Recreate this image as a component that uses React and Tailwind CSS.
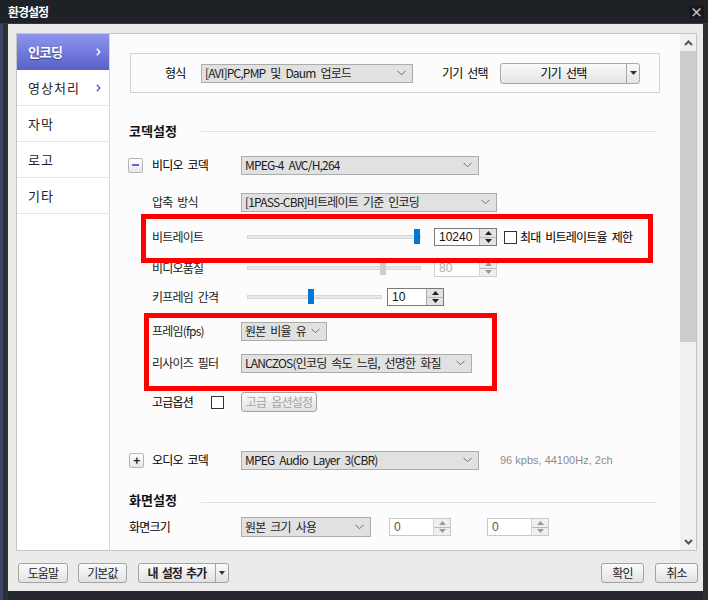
import React from 'react';

const KR = "font-['Noto_Sans_CJK_KR',sans-serif]";

const Chevron = ({ color = '#6e6e6e' }) => (
  <svg width="9" height="6" viewBox="0 0 9 6">
    <path d="M0.5 0.8 L4.5 4.8 L8.5 0.8" fill="none" stroke={color} strokeWidth="1" />
  </svg>
);

const SideArrow = ({ color }) => (
  <svg width="5" height="8" viewBox="0 0 5 8">
    <path d="M0.8 0.8 L3.8 4 L0.8 7.2" fill="none" stroke={color} strokeWidth="1.5" />
  </svg>
);

const Select = ({ w, h = 'h-[19px]', children }) => (
  <div className={`flex ${h} ${w} items-center justify-between border border-[#acacac] bg-[#e1e1e1] pl-[3px] pr-[6px] text-[12px] tracking-[-0.8px] [word-spacing:3px] text-[#1b1b1b]`}>
    <span className="whitespace-nowrap overflow-hidden">{children}</span>
    <Chevron />
  </div>
);

const SpinArrows = ({ faded }) => (
  <div className={`flex w-[17px] flex-col border-l ${faded ? 'border-[#d5d5d5] bg-[#efefef]' : 'border-[#acacac] bg-[#e3e3e3]'}`}>
    <div className="flex flex-1 items-center justify-center border-b border-[#b9b9b9]">
      <svg width="7" height="4" viewBox="0 0 7 4"><path d="M0 4 L3.5 0 L7 4 Z" fill={faded ? '#9a9a9a' : '#222'} /></svg>
    </div>
    <div className="flex flex-1 items-center justify-center">
      <svg width="7" height="4" viewBox="0 0 7 4"><path d="M0 0 L3.5 4 L7 0 Z" fill={faded ? '#9a9a9a' : '#222'} /></svg>
    </div>
  </div>
);

const Spin = ({ w, value, disabled, light }) => (
  <div className={`flex h-[18px] ${w} border ${disabled ? 'border-[#d0d0d0] text-[#b0b0b0]' : light ? 'border-[#c9c9c9] text-[#555]' : 'border-[#7a7a7a] text-[#111]'} bg-white`}>
    <div className="flex-1 pl-[4px] text-[12px] leading-[16px] font-['Liberation_Sans',sans-serif]">{value}</div>
    <SpinArrows faded={disabled || light} />
  </div>
);

const Slider = ({ w, pos, disabled }) => (
  <div className={`relative h-[16px] ${w}`}>
    <div className="absolute left-0 right-0 top-[6px] h-[4px] border border-[#d6d6d6] bg-[#e8e8e8]" />
    <div
      className={`absolute top-0 h-[15px] w-[6px] ${disabled ? 'bg-[#cdcdcd]' : 'bg-[#0078d7]'}`}
      style={{ left: pos }}
    />
  </div>
);

const Box = ({ className = '' }) => (
  <div className={`h-[13px] w-[13px] border border-[#333] bg-white ${className}`} />
);

const Btn = ({ className = '', children }) => (
  <div className={`flex h-[20px] items-center justify-center rounded-[3px] border border-[#a3a3a3] bg-gradient-to-b from-[#fbfbfb] to-[#e2e2e2] text-[12px] tracking-[-0.8px] [word-spacing:3px] text-[#222] ${className}`}>
    {children}
  </div>
);

const Label = ({ children }) => (
  <div className="w-[131px] pl-[42px] text-[12px] tracking-[-0.8px] [word-spacing:3px] text-[#1b1b1b] whitespace-nowrap">{children}</div>
);

const Toggle = ({ sign }) => (
  <div className="flex h-[15px] w-[15px] items-center justify-center rounded-[2px] border border-[#b5b5b5] bg-gradient-to-b from-white to-[#e6e6e6]">
    {sign === '-' ? (
      <div className="h-[2px] w-[7px] bg-[#5a68d8]" />
    ) : (
      <span className="text-[12px] font-bold leading-none text-[#222]">+</span>
    )}
  </div>
);

const SideItem = ({ children, arrow }) => (
  <div className="flex h-[36px] items-center justify-between border-b border-[#e6e6e6] pl-[11px] pr-[8px] text-[13px] tracking-[1px] text-[#222]">
    {children}
    {arrow && <SideArrow color="#5b68d6" />}
  </div>
);

export default function App() {
  return (
    <div className={`relative flex h-[600px] w-[708px] flex-col bg-[#24272c] ${KR}`}>
      {/* title */}
      <div className="flex h-[24px] items-center justify-between border-b border-[#34373c] bg-[#1e2126] pl-[8px] pr-[4px]">
        <span className="text-[12px] font-bold tracking-[-1px] text-white">환경설정</span>
        <div className="flex h-[12px] w-[15px] items-center justify-center bg-[#17191c] text-[13px] font-bold leading-none text-[#c8c8c8]">×</div>
      </div>

      <div className="flex flex-1">
        <div className="w-[3px] bg-[#3a4266]" />
        <div className="w-[5px] bg-[#2c2f34]" />
        <div className="flex h-[567px] w-[695px] flex-col bg-[#ebebeb] pt-[9px]">
          {/* main panel */}
          <div className="ml-[8px] flex h-[518px] w-[681px] border border-[#c4c4c4]">
            {/* sidebar */}
            <div className="w-[93px] border-r border-[#d8d8d8] bg-white">
              <div className="flex h-[36px] items-center justify-between bg-gradient-to-b from-[#8e95ee] to-[#5960c9] pl-[11px] pr-[8px] text-[13px] font-bold tracking-[-0.5px] text-white [text-shadow:0_1px_1px_rgba(0,0,40,0.4)]">
                인코딩
                <SideArrow color="#ffffff" />
              </div>
              <SideItem arrow>영상처리</SideItem>
              <SideItem>자막</SideItem>
              <SideItem>로고</SideItem>
              <SideItem>기타</SideItem>
            </div>

            {/* content */}
            <div className="relative w-[570px] overflow-hidden bg-[#fcfcfc] pt-[19px]">
              <div className="ml-[20px] flex h-[40px] w-[530px] items-center border border-[#d2d2d2] pl-[34px] text-[12px] tracking-[-0.8px] [word-spacing:3px]">
                <div className="w-[36px]">형식</div>
                <Select w="w-[212px]">[AVI]PC,PMP 및 Daum 업로드</Select>
                <div className="ml-[29px] w-[58px]">기기 선택</div>
                <div className="flex h-[21px] w-[140px] rounded-[3px] border border-[#a8a8a8] bg-gradient-to-b from-[#fafafa] to-[#e4e4e4]">
                  <div className="flex flex-1 items-center justify-center">기기 선택</div>
                  <div className="flex w-[13px] items-center justify-center border-l border-[#a8a8a8]">
                    <svg width="7" height="4" viewBox="0 0 7 4"><path d="M0 0 L3.5 4 L7 0 Z" fill="#333" /></svg>
                  </div>
                </div>
              </div>

              {/* 코덱설정 */}
              <div className="mt-[28px] flex h-[20px] items-center pl-[19px] pr-[24px]">
                <div className="w-[72px] text-[13px] font-bold text-[#111]">코덱설정</div>
                <div className="h-px flex-1 bg-[#e0e0e0]" />
              </div>

              <div className="mt-[14px] flex h-[20px] items-center">
                <div className="flex w-[131px] items-center pl-[18px] text-[12px] tracking-[-0.8px] [word-spacing:3px]">
                  <Toggle sign="-" />
                  <span className="ml-[9px]">비디오 코덱</span>
                </div>
                <Select w="w-[238px]">MPEG-4 AVC/H,264</Select>
              </div>

              <div className="mt-[17px] flex h-[20px] items-center">
                <Label>압축 방식</Label>
                <Select w="w-[256px]">[1PASS-CBR]비트레이트 기준 인코딩</Select>
              </div>

              <div className="mt-[15px] flex h-[20px] items-center">
                <Label>비트레이트</Label>
                <div className="ml-[6px]"><Slider w="w-[174px]" pos={167} /></div>
                <div className="ml-[13px]"><Spin w="w-[63px]" value="10240" /></div>
                <Box className="ml-[7px]" />
                <span className="ml-[3px] text-[12px] tracking-[-0.8px] [word-spacing:3px]">최대 비트레이트율 제한</span>
              </div>

              <div className="mt-[11px] flex h-[20px] items-center">
                <Label>비디오품질</Label>
                <div className="ml-[6px]"><Slider w="w-[174px]" pos={133} disabled /></div>
                <div className="ml-[13px]"><Spin w="w-[63px]" value="80" disabled /></div>
              </div>

              <div className="mt-[9px] flex h-[20px] items-center">
                <Label>키프레임 간격</Label>
                <div className="ml-[6px]"><Slider w="w-[135px]" pos={61} /></div>
                <div className="ml-[5px]"><Spin w="w-[57px]" value="10" /></div>
              </div>

              <div className="mt-[14px] flex h-[20px] items-center">
                <Label>프레임(fps)</Label>
                <Select w="w-[86px]">원본 비율 유</Select>
              </div>

              <div className="mt-[12px] flex h-[20px] items-center">
                <Label>리사이즈 필터</Label>
                <Select w="w-[231px]">LANCZOS(인코딩 속도 느림, 선명한 화질</Select>
              </div>

              <div className="mt-[19px] flex h-[20px] items-center">
                <div className="w-[101px] pl-[42px] text-[12px] tracking-[-0.8px]">고급옵션</div>
                <Box />
                <Btn className="ml-[17px] w-[76px] text-[#a5a5a5]">고급 옵션설정</Btn>
              </div>

              <div className="mt-[38px] flex h-[20px] items-center">
                <div className="flex w-[131px] items-center pl-[19px] text-[12px] tracking-[-0.8px] [word-spacing:3px]">
                  <Toggle sign="+" />
                  <span className="ml-[8px]">오디오 코덱</span>
                </div>
                <Select w="w-[238px]">MPEG Audio Layer 3(CBR)</Select>
                <span className="ml-[21px] font-['Liberation_Sans',sans-serif] text-[11px] text-[#8c8c8c]">96 kpbs, 44100Hz, 2ch</span>
              </div>

              {/* 화면설정 */}
              <div className="mt-[20px] flex h-[20px] items-center pl-[19px] pr-[24px]">
                <div className="w-[72px] text-[13px] font-bold text-[#111]">화면설정</div>
                <div className="mt-[5px] h-px flex-1 bg-[#e0e0e0]" />
              </div>

              <div className="mt-[7px] flex h-[20px] items-center">
                <div className="w-[131px] pl-[19px] text-[12px] tracking-[-0.8px]">화면크기</div>
                <Select w="w-[130px]" h="h-[20px]">원본 크기 사용</Select>
                <div className="ml-[18px]"><Spin w="w-[62px]" value="0" light /></div>
                <div className="ml-[36px]"><Spin w="w-[62px]" value="0" light /></div>
              </div>

              {/* annotation boxes */}
              <div className="absolute left-[31px] top-[180px] h-[49px] w-[512px] border-[5px] border-[#ff0000]" />
              <div className="absolute left-[34px] top-[279px] h-[78px] w-[353px] border-[5px] border-[#ff0000]" />
            </div>

            {/* scrollbar */}
            <div className="flex w-[16px] flex-col bg-[#f0f0f0]">
              <div className="flex h-[17px] items-center justify-center">
                <svg width="9" height="6" viewBox="0 0 9 6"><path d="M1 5 L4.5 1.5 L8 5" fill="none" stroke="#555" strokeWidth="2" /></svg>
              </div>
              <div className="h-[291px] bg-[#cdcdcd]" />
              <div className="flex-1" />
              <div className="flex h-[17px] items-center justify-center">
                <svg width="9" height="6" viewBox="0 0 9 6"><path d="M1 1 L4.5 4.5 L8 1" fill="none" stroke="#555" strokeWidth="2" /></svg>
              </div>
            </div>
          </div>

          {/* bottom buttons */}
          <div className="mt-[12px] flex items-center pl-[10px] pr-[5px]">
            <Btn className="w-[50px]">도움말</Btn>
            <Btn className="ml-[10px] w-[49px]">기본값</Btn>
            <div className="ml-[11px] flex h-[20px] w-[91px] rounded-[3px] border border-[#a3a3a3] bg-gradient-to-b from-[#fbfbfb] to-[#e2e2e2]">
              <div className="flex flex-1 items-center justify-center text-[12px] font-bold tracking-[-0.8px] [word-spacing:2px] text-[#222]">내 설정 추가</div>
              <div className="flex w-[13px] items-center justify-center border-l border-[#a3a3a3]">
                <svg width="6" height="4" viewBox="0 0 6 4"><path d="M0 0 L3 4 L6 0 Z" fill="#333" /></svg>
              </div>
            </div>
            <div className="flex-1" />
            <Btn className="w-[43px]">확인</Btn>
            <Btn className="ml-[11px] w-[43px]">취소</Btn>
          </div>
        </div>
        <div className="w-[5px] bg-[#2c2f34]" />
      </div>
    </div>
  );
}
